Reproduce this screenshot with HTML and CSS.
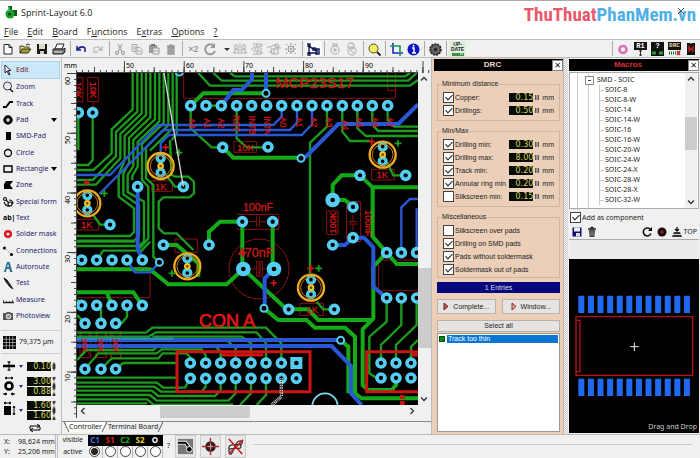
FILE: index.html
```html
<!DOCTYPE html>
<html lang="en">
<head>
    <meta charset="UTF-8">
    <meta name="viewport" content="width=device-width, initial-scale=1.0">
    <title>Sprint-Layout 6.0</title>
    <link rel="stylesheet" href="styles.css">
</head>
<body>
    <header class="titlebar">
        <svg class="app-icon" viewBox="0 0 13 13"><path d="M3 0h4v4h5v6H7z" fill="#0a5a14"/><circle cx="5" cy="8" r="4.5" fill="#16a02a"/><circle cx="4.5" cy="8" r="1.6" fill="#0b3d10"/><path d="M3 1h2v4H3z" fill="#3cc24b"/></svg>
        <span class="app-name">Sprint-Layout 6.0</span>
        <span class="brand"><span class="brand-red">ThuThuat</span><span class="brand-blue">PhanMem.vn</span></span>
        <button class="win-close" aria-label="Close window"><svg viewBox="0 0 8 8"><path d="M1 1l6 6M7 1L1 7" stroke="#456"/></svg></button>
    </header>

    <nav class="menu">
        <a href="#"><u>F</u>ile</a>
        <a href="#"><u>E</u>dit</a>
        <a href="#"><u>B</u>oard</a>
        <a href="#">F<u>u</u>nctions</a>
        <a href="#">E<u>x</u>tras</a>
        <a href="#"><u>O</u>ptions</a>
        <a href="#"><u>?</u></a>
    </nav>

    <div class="toolbar">
        <button aria-label="New"><svg viewBox="0 0 16 16"><path d="M4 3.500h5l3 3v6.500H4zM9 3.500v3h3" fill="#fff" stroke="#222"/></svg></button>
        <button aria-label="Open"><svg viewBox="0 0 16 16"><path d="M3 12V5h3l1 1h5v2" fill="#e8d860" stroke="#443"/><path d="M3 12l2-4h9l-3 4z" fill="#a89a30" stroke="#332"/><path d="M9 4q2-2 4 0" fill="none" stroke="#222"/></svg></button>
        <button aria-label="Save"><svg viewBox="0 0 16 16"><path d="M3 3h10v10H3z" fill="#1a1c10"/><path d="M5 3h6v5H5z" fill="#d8dcc8"/><path d="M6 10h4v3H6z" fill="#ccc"/></svg></button>
        <button aria-label="Print"><svg viewBox="0 0 16 16"><path d="M6 3h7l-2 5H4z" fill="#fff" stroke="#222"/><path d="M2 8h11l1-1v4l-2 2H2z" fill="#777" stroke="#222"/><path d="M3 11h8" stroke="#eee"/></svg></button>
        <span class="sep"></span>
        <button aria-label="Undo"><svg viewBox="0 0 16 16"><path d="M4 5v4h4M4 9q4-5 8-2v4" fill="none" stroke="#1a1a8c" stroke-width="1.500"/></svg></button>
        <button aria-label="Redo"><svg viewBox="0 0 16 16"><path d="M12 5v4H8M12 9q-4-5-8-2v4h4" fill="none" stroke="#bbb" stroke-width="1.300"/></svg></button>
        <span class="sep"></span>
        <button aria-label="Cut"><svg viewBox="0 0 16 16" fill="none" stroke="#aaa" stroke-width="1.300"><path d="M6 3l4 8M10 3l-4 8"/><circle cx="5" cy="12" r="1.500"/><circle cx="11" cy="12" r="1.500"/></svg></button>
        <button aria-label="Copy"><svg viewBox="0 0 16 16" fill="#eee" stroke="#aaa"><path d="M3 3.500h5v7H3zM7 6.500h4l2 2V13H7z"/><path d="M4 6h3M4 8h3M8 10h4"/></svg></button>
        <button aria-label="Paste"><svg viewBox="0 0 16 16"><path d="M3 4h8v8H3z" fill="#999"/><path d="M5 3h4v2H5z" fill="#777"/><path d="M7 7h6v6H7z" fill="#eee" stroke="#999"/><path d="M8 10h4" stroke="#999"/></svg></button>
        <button aria-label="Delete"><svg viewBox="0 0 16 16"><path d="M4 5h8M6.500 4h3M5 6.500h6v6.500H5z" fill="#bbb" stroke="#999" stroke-width="1.300"/><path d="M7 7v5M9 7v5" stroke="#888"/></svg></button>
        <span class="sep"></span>
        <button class="times">×2</button>
        <button aria-label="Rotate"><svg viewBox="0 0 16 16"><path d="M12 5a5 5 0 1 0 1 5" fill="none" stroke="#999" stroke-width="2"/><path d="M13 2v5H8z" fill="#999"/></svg></button>
        <button class="drop" aria-label="Rotate angle"><svg viewBox="0 0 13 16"><path d="M5 7h6l-3 3z" fill="#333"/></svg></button>
        <button aria-label="Mirror horizontally"><svg viewBox="0 0 16 16" fill="none" stroke="#aaa"><path d="M8 2v12" stroke-dasharray="2 1"/><path d="M3 13V4h3v9M3 8h3M13 13V4h-3v9M10 8h3M1 12h3M12 12h3"/></svg></button>
        <button aria-label="Mirror vertically"><svg viewBox="0 0 16 16" fill="none" stroke="#aaa"><path d="M2 8h12" stroke-dasharray="2 1"/><path d="M4 3h8v3H4M8 3v3M4 13h8v-3H4M8 10v3M12 3l2 2M12 13l2-2"/></svg></button>
        <button aria-label="Align"><svg viewBox="0 0 16 16" fill="none" stroke="#aaa"><path d="M1 6h4l2-2h3l2 3h3M5 8h7v5H6zM3 10l2 2M8 8v5"/><circle cx="11" cy="5" r="2"/></svg></button>
        <button aria-label="Snap to grid"><svg viewBox="0 0 16 16" fill="none" stroke="#999"><circle cx="8" cy="8" r="3"/><circle cx="8" cy="8" r="1"/><path d="M8 2v3M8 11v3M2 8h3M11 8h3M3 3l3 3M13 3l-3 3M3 13l3-3M13 13l-3-3" stroke-dasharray="2 1"/></svg></button>
        <span class="sep"></span>
        <button class="checked" aria-label="Rubberband"><svg viewBox="0 0 16 16" fill="none" stroke="#0c1850" stroke-width="1.400"><path d="M4 5v7h8V9L8 8zM4 5l4 3"/><path d="M3 3h2v2H3zM3 12h2v2H3zM11 8h3v5h-3zM8 7h2v2H8z"/></svg></button>
        <span class="sep"></span>
        <button aria-label="Lock"><svg viewBox="0 0 16 16" fill="none" stroke="#bbb" stroke-width="1.300"><circle cx="8" cy="9" r="4"/><path d="M6 6V3h4v3M8 7v4M6 9h4"/></svg></button>
        <button aria-label="Unlock"><svg viewBox="0 0 16 16" fill="none" stroke="#bbb" stroke-width="1.300"><circle cx="7" cy="5" r="3"/><circle cx="8" cy="10" r="4"/><path d="M6 9l4 3"/></svg></button>
        <span class="sep"></span>
        <button aria-label="Zoom"><svg viewBox="0 0 16 16"><circle cx="7.500" cy="7.500" r="4.500" fill="#f4ee63" stroke="#554f20"/><path d="M11 11l3.500 3.500" stroke="#222" stroke-width="2"/></svg></button>
        <span class="sep"></span>
        <button aria-label="Section"><svg viewBox="0 0 16 16" fill="none" stroke-width="1.600"><path d="M5 2v10h10" stroke="#1b2cc0"/><path d="M2 5h10v10" stroke="#13975b"/></svg></button>
        <button aria-label="Info"><svg viewBox="0 0 16 16"><circle cx="8.500" cy="8.500" r="6" fill="#0a15c8"/><path d="M7 7h2v5M7 12h4" stroke="#fff" stroke-width="1.500" fill="none"/><circle cx="8.500" cy="4.700" r="1" fill="#fff"/></svg></button>
        <span class="sep"></span>
        <button aria-label="Settings"><svg viewBox="0 0 16 16"><circle cx="8.500" cy="8.500" r="5.500" fill="#555" stroke="#222" stroke-width="1.500" stroke-dasharray="2 1"/><circle cx="8.500" cy="8.500" r="3" fill="none" stroke="#999" stroke-dasharray="1 1"/><circle cx="8.500" cy="8.500" r="1.500" fill="#222"/></svg></button>
        <span class="sep"></span>
        <button class="update" aria-label="Update"><span>UP-<br>DATE</span><svg viewBox="0 0 14 4"><path d="M1 1h12v3H1z" fill="#3f9141"/><path d="M9 2h3" stroke="#cfe9c8"/></svg></button>
        <span class="spacer"></span>
        <span class="sep"></span>
        <button aria-label="Footprints"><svg viewBox="0 0 16 16"><circle cx="8" cy="8.500" r="3.500" fill="none" stroke="#d874b4" stroke-width="2.600"/></svg></button>
        <button class="chip"><b>R1</b><svg viewBox="0 0 13 6"><path d="M6.500 0v6M5 1h3M5 5h3" stroke="#333"/></svg></button>
        <button class="chip"><b>?</b><svg viewBox="0 0 13 6"><path d="M0 0h13v6H0z" fill="#111"/><path d="M1 3h4M8 3h4" stroke="#2a9a38" stroke-width="3"/></svg></button>
        <button class="chip chip-drc"><b>DRC</b><svg viewBox="0 0 13 6"><path d="M1 3h3M5 3h3" stroke="#276e2a" stroke-width="3" stroke-dasharray="1 1"/><path d="M9 1l3 4M12 1L9 5" stroke="#b3201c" stroke-width="1.500"/></svg></button>
        <button aria-label="Macros"><svg viewBox="0 0 16 16"><path d="M4 2h8v12H4z" fill="#151010"/><path d="M6 11V6l2 3 2-3v5" fill="none" stroke="#c2201d" stroke-width="1.300"/><path d="M7 2h2" stroke="#ddd"/></svg></button>
    </div>

    <main class="main">
        <aside class="side">
            <div class="tools">
                <button class="tool selected"><svg viewBox="0 0 12 12"><path d="M3 1v8l2-2 2 4 1-.500-2-4h3z" fill="#fff" stroke="#223"/></svg>Edit</button>
                <button class="tool"><svg viewBox="0 0 12 12"><circle cx="5.500" cy="5" r="4" fill="#eef" stroke="#333"/><path d="M8 8l3 3" stroke="#111" stroke-width="1.500"/></svg>Zoom</button>
                <button class="tool"><svg viewBox="0 0 12 12"><path d="M1 9h3l4-5h3" fill="none" stroke="#000" stroke-width="2"/></svg>Track</button>
                <button class="tool"><svg viewBox="0 0 12 12"><circle cx="6" cy="6" r="3.200" fill="none" stroke="#000" stroke-width="3"/></svg>Pad<i class="more"></i></button>
                <button class="tool"><svg viewBox="0 0 12 12"><path d="M4 2h5v8H4z"/></svg>SMD-Pad</button>
                <button class="tool"><svg viewBox="0 0 12 12"><circle cx="6" cy="6" r="3.500" fill="none" stroke="#000" stroke-width="1.300"/></svg>Circle</button>
                <button class="tool"><svg viewBox="0 0 12 12"><path d="M2 3h8v6H2z" fill="none" stroke="#000" stroke-width="1.400"/></svg>Rectangle<i class="more"></i></button>
                <button class="tool"><svg viewBox="0 0 12 12"><path d="M4 2h7L8 6l3 4H2V5z"/></svg>Zone</button>
                <button class="tool"><svg viewBox="0 0 12 12" fill="none" stroke="#111" stroke-width="1.200"><circle cx="3" cy="3" r="1.500"/><circle cx="8" cy="8" r="2"/><path d="M4 4l3 3M2 6q2 5 6 4M7 4q4 0 4 4"/></svg>Special form</button>
                <button class="tool"><span class="ab">ab|</span>Text</button>
                <button class="tool"><svg viewBox="0 0 12 12"><circle cx="6" cy="6" r="2.800" fill="none" stroke="#e0101c" stroke-width="2.400"/></svg>Solder mask</button>
                <button class="tool"><svg viewBox="0 0 12 12"><circle cx="2.500" cy="3" r="1.600"/><circle cx="9.500" cy="9.500" r="1.600"/><path d="M3 3l6 6" stroke="#777" stroke-dasharray="1 1"/></svg>Connections</button>
                <button class="tool"><svg viewBox="0 0 12 12"><path d="M2 11L5 1h2.500l3 10H8L7.500 8h-3L4 11zM5 6h2L6 3z" fill="#28708e"/></svg>Autoroute</button>
                <button class="tool"><svg viewBox="0 0 12 12"><path d="M2 1l3 2 4 6 2 3-3-2-4-5z" fill="#222" stroke="#222"/></svg>Test</button>
                <button class="tool"><svg viewBox="0 0 12 12"><path d="M1 8.500h11" stroke="#222" stroke-width="1.500"/><path d="M1.500 6v2M4.500 7v1M7.500 7v1M10.500 6v2" stroke="#555"/></svg>Measure</button>
                <button class="tool"><svg viewBox="0 0 12 12"><path d="M1 3h3l1-1h3l1 1h2v7H1z" fill="#555"/><circle cx="6.500" cy="6.500" r="2.300" fill="#999" stroke="#eee"/></svg>Photoview</button>
            </div>
            <button class="snap"><svg viewBox="0 0 14 14"><path d="M0 0h14v14H0z"/><path d="M0 3.500h14M0 7h14M0 10.500h14M3.500 0v14M7 0v14M10.500 0v14" stroke="#ccc" stroke-width=".700"/></svg>79,375 µm</button>
            <div class="sizes">
                <div class="size">
                    <svg viewBox="0 0 14 12"><path d="M1 6h12" stroke="#000" stroke-width="2.500"/><path d="M7 1v4M7 7v4M5.500 2h3M5.500 10h3" stroke="#000"/></svg>
                    <i class="pick"></i>
                    <div class="fields"><input aria-label="Track width" value="0.10"></div>
                </div>
                <div class="size tall">
                    <svg viewBox="0 0 14 20"><circle cx="7" cy="10" r="3.500" fill="none" stroke="#000" stroke-width="2.600"/><path d="M3 2h8M3 2l2-1M3 2l2 1M11 2L9 1M11 2L9 3M1 18h4M9 18h4M5 18l-2-1v2zM9 18l2-1v2z" stroke="#000" fill="none"/></svg>
                    <i class="pick"></i>
                    <div class="fields"><input aria-label="Pad outer" value="3.00"><input aria-label="Pad inner" value="0.88"></div>
                </div>
                <div class="size tall">
                    <svg viewBox="0 0 14 20"><path d="M2 6h7v9H2z"/><path d="M2 3h7M12 6v9M2 3l2-1M2 3l2 1M9 3L7 2M9 3L7 4M12 6l-1 2M12 6l1 2M12 15l-1-2M12 15l1-2" stroke="#000" fill="none"/></svg>
                    <i class="pick"></i>
                    <div class="fields"><input aria-label="SMD width" value="1.60"><input aria-label="SMD height" value="1.60"></div>
                </div>
                <button class="swap" aria-label="Swap"><svg viewBox="0 0 14 8"><path d="M2 5V2h9M9 0l3 2-3 2M12 3v3H3M5 4L2 6l3 2" fill="none" stroke="#000"/></svg></button>
            </div>
        </aside>

        <section class="work">
            <div class="board">
                <svg class="ruler-top">
                    <path class="tick" d="M14 11.500H368" stroke-width="3" stroke-dasharray="1 4.970"/>
                    <path class="tick" d="M32 10H368" stroke-width="6" stroke-dasharray="1 28.850"/>
                    <path class="tick" d="M62 7H368" stroke-width="12" stroke-dasharray="1 58.700"/>
                    <path class="tick" d="M15 12.500H356"/>
                    <text x="2" y="8">mm</text><text x="64" y="8">50</text><text x="124" y="8">60</text><text x="183" y="8">70</text><text x="243" y="8">80</text><text x="303" y="8">90</text>
                </svg>
                <svg class="ruler-left">
                    <path class="tick" d="M13.500 0V345" stroke-width="3" stroke-dasharray="1 4.970"/>
                    <path class="tick" d="M12 30V345" stroke-width="6" stroke-dasharray="1 28.850"/>
                    <path class="tick" d="M10 0V345" stroke-width="10" stroke-dasharray="1 58.700"/>
                    <path class="tick" d="M14.500 0V345"/>
                    <text transform="translate(8 12) rotate(-90)">60</text><text transform="translate(8 71) rotate(-90)">50</text><text transform="translate(8 131) rotate(-90)">40</text><text transform="translate(8 190) rotate(-90)">30</text><text transform="translate(8 250) rotate(-90)">20</text><text transform="translate(8 309) rotate(-90)">10</text>
                </svg>

                <svg class="pcb" viewBox="51 39 1023 996" preserveAspectRatio="xMinYMin slice">
                    <defs>
                        <path id="pads" d="M55 158h0M98 158h0M233 380h0M370 380h0M150 494h0M488 262h0M624 261h0M310 555h0M447 555h0M547 485h0M638 485h0M900 346h0M1037 346h0M879 441h0M879 533h0M818 555h0M980 578h0M1024 578h0M1070 578h0
                            M392 137h0M438 137h0M484 137h0M530 137h0M575 137h0M620 137h0M665 137h0M711 137h0M756 137h0M801 137h0M847 137h0M892 137h0M937 137h0M983 137h0
                            M65 600h0M110 600h0M156 600h0M201 600h0M247 600h0M65 736h0M110 736h0M156 736h0M201 736h0M247 736h0
                            M75 790h0M123 790h0M167 790h0M75 927h0M123 927h0M167 927h0M686 748h0M823 748h0M980 714h0M1024 714h0M1070 714h0
                            M391 909h0M437 909h0M482 909h0M527 909h0M573 909h0M618 909h0M664 909h0M391 955h0M437 955h0M482 955h0M527 955h0M573 955h0M618 955h0M664 955h0M709 955h0
                            M963 909h0M1008 909h0M1053 909h0M963 954h0M1008 954h0M1053 954h0"/>
                        <path id="big-pads" d="M818 420h0M550 627h0M642 627h0"/>
                        <path id="vias" d="M723 295h0M618 100h0M298 607h0M612 745h0M842 841h0M358 36h0"/>
                        <g id="led">
                            <path d="M0-24h0M0 20h0" stroke="#4ccdf0" stroke-width="31" stroke-linecap="round"/>
                            <path d="M0-24h0M0 20h0" stroke="#000" stroke-width="11" stroke-linecap="round"/>
                            <circle r="39" fill="none" stroke="#efab1b" stroke-width="7"/>
                            <circle r="31" fill="none" stroke="#c67c10" stroke-width="3"/>
                            <circle r="7" fill="#704800" stroke="#f7c51e" stroke-width="6"/>
                        </g>
                        <path id="plus" d="M-10 0H10M0-10V10"/>
                    </defs>
                    <rect x="0" y="0" width="3000" height="3000"/>

                    <!-- component outlines below the copper -->
                    <g class="silk thin">
                        <path d="M371 39V115H1006V39M983 39V92H1006M51 624H270V713H51M1074 600H956V692H1074"/>
                        <path d="M83 53h33v72h-33zM99 125v20M36 53h33v72h-33z"/>
                        <path d="M275 362h62v32h-62zM48 478h68v32h-68zM935 328h68v32h-68zM720 730h70v36h-70zM522 245h68v32h-68zM345 537h68v40h-68z"/>
                        <path d="M800 453h34v70h-34zM860 425h42v120h-42zM879 465v20M866 485h26M866 492h26M879 492v20"/>
                        <path d="M530 463h126v45H530M565 485h22M590 470v30M598 470v30M598 485h22"/>
                        <circle cx="597" cy="627" r="90"/>
                        <path d="M570 627h20M590 604h7v46h-7zM600 604h7v46h-7zM607 627h16"/>
                        <path d="M60 815h32v78H60zM108 815h32v78h-32zM152 815h32v78h-32zM60 815l32 78M92 815l-32 78M108 815l32 78M140 815l-32 78M152 815l32 78M184 815l-32 78"/>
                    </g>

                    <g class="green">
                        <path d="M218 39V148L155 208V280L100 330H51M232 39V155L168 216V288L98 360H51M245 39V160L181 222V295L108 374H51"/>
                        <path d="M258 39V165L194 228V300L176 345V410L222 445V516L210 528H51M271 39V172L207 234V308L190 340V403L237 436V528L222 542H51"/>
                        <path d="M285 39V178L220 240V318L203 345V396L252 425V545L235 558H51M298 39V184L233 246V320L217 348V360M311 39V190L246 252V360L265 380V535L240 565"/>
                        <path d="M325 39V196L258 262V355L280 375V590L298 607M338 39V205L270 272M350 39V222L335 240"/>
                        <path d="M98 158V300L85 315H51M55 158V270M51 545H225M110 600L130 572H245L270 545"/>
                        <path d="M330 240L335 345L345 350H385L402 365V400L388 412H310L296 425V505L312 520H350L400 570M318 345L345 380H370M100 465L120 494H150"/>
                        <path d="M415 39L450 77H1050L1074 60M460 39L485 62H1045L1070 39M510 39L525 49H1035L1050 39"/>
                        <path d="M392 137V205L455 262H488M438 137H484M530 137V235L560 262H624M801 137V200L750 248V640"/>
                        <path d="M847 137V215L870 243H930M892 137V205L918 228H1074M937 137V195L955 213H1074M983 137V180L1003 200H1074M983 310L1000 346H1037"/>
                        <path d="M51 765L75 790M123 790V750L110 736M201 736V770L185 790H167M823 748H790L770 725"/>
                        <path d="M51 818H258L277 803H618L664 850V909M51 830H265L288 817H590L618 850V909M277 830H545L573 850V909M505 845L527 865V909"/>
                        <path d="M167 927L190 909H348M123 927L155 895H295L308 880H380L391 892V909M75 927L115 880H290L305 868H425L437 885V909M51 900L80 870H280L295 858H465L482 875V909"/>
                        <path d="M51 953H348M51 968H290L310 983H375L391 955M51 980H283L303 995H425L437 980V955M51 992H275L295 1008H465L482 990V955"/>
                        <path d="M51 1005H270L290 1022H505L527 1000V955M51 1018H262L280 1034H520M51 1030H262M573 955V1000L540 1035M618 955V1005L590 1035"/>
                        <path d="M980 714V785L928 830V940L950 954M1024 714V795L963 855V909M1070 714V795L1008 855V909M1074 840L1053 860V909"/>
                    </g>
                    <g class="green wide">
                        <path d="M392 137L430 100H618M488 262L520 293H723M447 555V515L480 485H547V627M638 485V627M310 555H350L415 610V650"/>
                        <path d="M900 346H845L818 375V420H855L879 441M900 346L938 382H1074M938 382V530L980 578L1010 612H1074M940 620L980 578"/>
                        <path d="M51 628H270L325 673H500L550 627M51 697H220L247 736M140 697L156 736M51 720L65 736"/>
                        <path d="M550 627L680 748M612 745L655 780H740L765 803H855L885 830V1000L905 1015H1074"/>
                        <path d="M686 748H745L775 780H940M940 620V775L908 808V975L925 990H995L1008 975V954M842 841L865 860V1000"/>
                    </g>

                    <g class="blue">
                        <path d="M51 345H150L295 195H640L665 170V137M118 402L310 210H690L711 188V137M302 290V250L327 225H725L756 193V137"/>
                        <path d="M201 600L225 637H270L298 607M1024 578V442L1050 417H1074M1070 578V445"/>
                    </g>
                    <g class="blue wide">
                        <path d="M484 137L520 90H545L576 57V39M618 100V39M723 295L740 288L835 192H1015L1074 133M233 380V565L247 600"/>
                        <path d="M818 555H855L879 533H912L940 562V680L980 714M642 627L614 655V745"/>
                        <path d="M51 840H842M51 858H815L873 918V1000L905 1035"/>
                    </g>
                    <path d="M51 836H340" stroke="#2d8fb5" stroke-width="7"/>

                    <g class="silk frame">
                        <path d="M351 875H750V995H351zM485 885H610M1074 875H920V995H1074M1055 885H1074"/>
                    </g>
                    <path d="M1027 1005v12M1027 1023v12" stroke="#d01010" stroke-width="14"/>

                    <g fill="none" stroke-linecap="round">
                        <use href="#pads" stroke="#55cdf2" stroke-width="35"/>
                        <use href="#pads" stroke="#000" stroke-width="13"/>
                        <use href="#big-pads" stroke="#55cdf2" stroke-width="44"/>
                        <use href="#big-pads" stroke="#000" stroke-width="14"/>
                        <use href="#vias" stroke="#55cdf2" stroke-width="27"/>
                        <use href="#vias" stroke="#000" stroke-width="15"/>
                        <circle cx="795" cy="1038" r="38" stroke="#7fdcf0" stroke-width="5"/>
                    </g>
                    <path d="M691 891h36v36h-36z" fill="#55cdf2"/><circle cx="709" cy="909" r="7"/>

                    <use href="#led" x="302" y="318"/><use href="#led" x="82" y="430"/><use href="#led" x="382" y="619"/><use href="#led" x="968" y="284"/><use href="#led" x="753" y="683"/>

                    <g stroke="#d31616" stroke-width="5">
                        <use href="#plus" x="317" y="262"/><use href="#plus" x="80" y="368"/><use href="#plus" x="935" y="245"/><use href="#plus" x="752" y="625"/><use href="#plus" x="550" y="578"/><use href="#plus" x="641" y="669"/>
                    </g>
                    <g stroke="#1ba51f" stroke-width="5">
                        <use href="#plus" x="357" y="278"/><use href="#plus" x="133" y="400"/><use href="#plus" x="336" y="640"/><use href="#plus" x="1014" y="250"/><use href="#plus" x="776" y="625"/>
                    </g>

                    <g class="label">
                        <text x="764" y="84" font-size="46">MCP23S17</text>
                        <text x="594" y="453" font-size="32">100nF</text>
                        <text x="587" y="591" font-size="38">470nF</text>
                        <text class="con" x="501" y="800" font-size="54">CON A</text>
                        <g font-size="28">
                            <text x="302" y="390">1K</text><text x="80" y="504">1K</text><text x="967" y="354">1K</text><text x="757" y="759">1K</text><text x="556" y="272">10K</text>
                            <text transform="translate(89 90) rotate(90)">10K</text><text transform="translate(46 90) rotate(90)">10K</text>
                            <text transform="translate(827 488) rotate(-90)">100K</text><text transform="translate(916 490) rotate(90)">100nF</text>
                        </g>
                        <g font-size="25">
                            <text transform="translate(387 190) rotate(90)">A3</text><text transform="translate(431 190) rotate(90)">A1</text><text transform="translate(475 190) rotate(90)">A2</text><text transform="translate(520 190) rotate(90)">RST</text>
                            <text transform="translate(566 196) rotate(90)">INTB</text><text transform="translate(612 196) rotate(90)">INTA</text><text transform="translate(661 187) rotate(90)">A0</text><text transform="translate(708 187) rotate(90)">A1</text><text transform="translate(753 187) rotate(90)">A2</text>
                            <text transform="translate(798 187) rotate(90)">A3</text><text transform="translate(845 195) rotate(90)">A4</text><text transform="translate(889 187) rotate(90)">A5</text><text transform="translate(935 187) rotate(90)">A6</text><text transform="translate(981 187) rotate(90)">A7</text>
                        </g>
                        <g font-size="24">
                            <text transform="translate(67 855) rotate(90)">10K</text><text transform="translate(115 855) rotate(90)">10K</text><text transform="translate(159 855) rotate(90)">10K</text>
                        </g>
                    </g>
                    <path d="M312 39L370 380" stroke="#d8d8d8" stroke-width="4"/>
                    <path d="M664 955V1010L635 1035" fill="none" stroke="#ddd" stroke-width="10" stroke-dasharray="3 2"/>
                    <path d="M664 955V1010L635 1035" fill="none" stroke="#444" stroke-width="4" stroke-dasharray="4 3"/>
                </svg>

                <div class="vscroll">
                    <svg viewBox="0 0 12 12"><path d="M3 7.500l3-3 3 3"/></svg>
                    <i class="thumb"></i>
                    <svg viewBox="0 0 12 12"><path d="M3 4.500l3 3 3-3"/></svg>
                </div>
                <div class="hscroll">
                    <svg viewBox="0 0 12 12"><path d="M7.500 3l-3 3 3 3"/></svg>
                    <i class="thumb"></i>
                    <svg viewBox="0 0 12 12"><path d="M4.500 3l3 3-3 3"/></svg>
                </div>
            </div>
            <div class="tabs">
                <button class="tab current">Controller</button>
                <button class="tab">Terminal Board</button>
            </div>
        </section>

        <section class="drc">
            <div class="panel-title">DRC<button aria-label="Close DRC">✕</button></div>
            <div class="drc-body">
                <fieldset>
                    <legend>Minimum distance</legend>
                    <div class="rule"><label><input type="checkbox" checked>Copper:</label><input class="num" aria-label="Copper" value="0.15"><i class="spin"></i>mm</div>
                    <div class="rule"><label><input type="checkbox" checked>Drillings:</label><input class="num" aria-label="Drillings" value="0.50"><i class="spin"></i>mm</div>
                </fieldset>
                <fieldset>
                    <legend>Min/Max</legend>
                    <div class="rule"><label><input type="checkbox" checked>Drilling min:</label><input class="num" aria-label="Drilling min" value="0.30"><i class="spin"></i>mm</div>
                    <div class="rule"><label><input type="checkbox" checked>Drilling max:</label><input class="num" aria-label="Drilling max" value="8.00"><i class="spin"></i>mm</div>
                    <div class="rule"><label><input type="checkbox" checked>Track min:</label><input class="num" aria-label="Track min" value="0.20"><i class="spin"></i>mm</div>
                    <div class="rule"><label><input type="checkbox" checked>Annular ring min</label><input class="num" aria-label="Annular ring min" value="0.20"><i class="spin"></i>mm</div>
                    <div class="rule"><label><input type="checkbox">Silkscreen min:</label><input class="num" aria-label="Silkscreen min" value="0.15"><i class="spin"></i>mm</div>
                </fieldset>
                <fieldset class="misc">
                    <legend>Miscellaneous</legend>
                    <div class="rule"><label><input type="checkbox">Silkscreen over pads</label></div>
                    <div class="rule"><label><input type="checkbox" checked>Drilling on SMD pads</label></div>
                    <div class="rule"><label><input type="checkbox" checked>Pads without soldermask</label></div>
                    <div class="rule"><label><input type="checkbox" checked>Soldermask out of pads</label></div>
                </fieldset>
                <div class="entries">1 Entries</div>
                <div class="run">
                    <button><svg viewBox="0 0 6 9"><path d="M1 1v7l4-3.500z" fill="#c4524a" stroke="#702420"/></svg>Complete...</button>
                    <button><svg viewBox="0 0 6 9"><path d="M1 1v7l4-3.500z" fill="#e8a8a0" stroke="#8c2a24"/></svg>Window...</button>
                </div>
                <button class="select-all">Select all</button>
                <ul class="results">
                    <li><i></i><span>Track too thin</span></li>
                </ul>
            </div>
        </section>

        <i class="splitter"></i>

        <section class="macros">
            <div class="panel-title red">Macros<button aria-label="Close Macros">✕</button></div>
            <div class="tree">
                <div class="tree-list">
                    <div class="folder">SMD - SOIC</div>
                    <ul>
                        <li>SOIC-8</li>
                        <li>SOIC-8-W</li>
                        <li>SOIC-14</li>
                        <li>SOIC-14-W</li>
                        <li>SOIC-16</li>
                        <li>SOIC-16-W</li>
                        <li>SOIC-20-W</li>
                        <li>SOIC-24-W</li>
                        <li>SOIC-24-X</li>
                        <li>SOIC-28-W</li>
                        <li>SOIC-28-X</li>
                        <li>SOIC-32-W</li>
                    </ul>
                </div>
                <div class="vscroll">
                    <svg viewBox="0 0 12 12"><path d="M3 7.500l3-3 3 3"/></svg>
                    <i class="thumb"></i>
                    <svg viewBox="0 0 12 12"><path d="M3 4.500l3 3 3-3"/></svg>
                </div>
            </div>
            <label class="as-component"><input type="checkbox" checked>Add as component</label>
            <div class="macro-bar">
                <button aria-label="Save macro"><svg viewBox="0 0 12 12"><path d="M1.500 1.500h9v9h-9z" fill="#10106c"/><path d="M3 1.500h6v4H3z" fill="#eef"/><path d="M5 7h4v3.500H5z" fill="#ddd"/></svg></button>
                <button aria-label="Delete macro"><svg viewBox="0 0 12 12"><path d="M2 3h8M4.500 1.500h3" stroke="#222" stroke-width="1.300"/><path d="M3 4h6l-.500 7h-5z" fill="#444"/><path d="M5 5v5M7 5v5" stroke="#aaa" stroke-width=".700"/></svg></button>
                <span class="spacer"></span>
                <button aria-label="Rotate macro"><svg viewBox="0 0 12 12"><path d="M9.500 3.500a4 4 0 1 0 .500 4" fill="none" stroke="#111" stroke-width="1.600"/><path d="M11 1v4H7z"/></svg></button>
                <button aria-label="Via"><svg viewBox="0 0 12 12"><circle cx="6" cy="6" r="4.500" fill="#1a0606"/><circle cx="6" cy="6" r="1.500" fill="#b8232a"/></svg></button>
                <button class="top-side"><svg viewBox="0 0 12 12"><path d="M3 6h6l2 5H1z" fill="#333"/><path d="M6 1v4M4 3l2 2 2-2" stroke="#111" fill="none" stroke-width="1.300"/><path d="M2 8.500h8" stroke="#ccc"/></svg>TOP</button>
            </div>
            <div class="strip"></div>
            <div class="preview">
                <svg viewBox="21 609 390 522" preserveAspectRatio="xMidYMid meet">
                    <path d="M49 745h336M49 994h336" stroke="#1f6af0" stroke-width="52" stroke-dasharray="18 10.800"/>
                    <path d="M42 782h350v176H42zM42 793h12v154H42z" fill="none" stroke="#b81414" stroke-width="4"/>
                    <path d="M205 872h25M217 860v25" stroke="#eee" stroke-width="3"/>
                </svg>
                <span>Drag and Drop</span>
            </div>
        </section>
    </main>

    <footer class="status">
        <div class="coords"><span>X:</span><span>98,624 mm</span><span>Y:</span><span>25,206 mm</span></div>
        <table class="layers">
            <tr><th>visible</th><td class="c1">C1</td><td class="s1">S1</td><td class="c2">C2</td><td class="s2">S2</td><td class="o">O</td></tr>
            <tr><th>active</th>
                <td><input type="radio" name="layer" aria-label="C1" checked></td>
                <td><input type="radio" name="layer" aria-label="S1"></td>
                <td><input type="radio" name="layer" aria-label="C2"></td>
                <td><input type="radio" name="layer" aria-label="S2"></td>
                <td><input type="radio" name="layer" aria-label="O"></td>
            </tr>
        </table>
        <a class="help" href="#">?</a>
        <button class="mode" aria-label="Ground plane"><svg viewBox="0 0 20 20"><path d="M2 2h16v16H2z" fill="#777"/><path d="M2 6h8l5 7" fill="none" stroke="#fff" stroke-width="4"/><path d="M2 6h8l5 7" fill="none" stroke="#000" stroke-width="2"/><circle cx="14" cy="13" r="3" stroke="#fff"/></svg></button>
        <button class="mode" aria-label="Crosshair"><svg viewBox="0 0 20 20"><circle cx="10" cy="10" r="5.500" fill="#222"/><path d="M10 1v18M1 10h18" stroke="#b3262a" stroke-width="1.500"/><path d="M10 7v6M7 10h6" stroke="#e9a0a0"/></svg></button>
        <button class="mode" aria-label="Connections off"><svg viewBox="0 0 20 20" fill="none"><path d="M3 13q-1-5 6-5h7q3-4-1-4t-7 9-5 2q0-3 6-3h4q4 0 2-4" stroke="#333" stroke-width="1.300"/><path d="M3 2l14 16M18 3L3 18" stroke="#c01c20" stroke-width="1.600"/></svg></button>
        <div class="hint"></div>
    </footer>
</body>
</html>
```

FILE: styles.css
```css
* {
    box-sizing: border-box;
}
body {
    margin: 0;
    height: 100vh;
    display: flex;
    flex-direction: column;
    overflow: hidden;
    background: #f0f0f0;
    color: #222;
    font: 7px/10px "Noto Sans", sans-serif;
}
button, input {
    font: inherit;
    color: inherit;
    margin: 0;
    padding: 0;
    border: 0;
    background: none;
    border-radius: 0;
}
svg {
    display: block;
}
a {
    color: inherit;
    text-decoration: none;
}
.spacer {
    flex: 1;
}

/* title and menu */
.titlebar {
    position: relative;
    height: 24px;
    flex: none;
    display: flex;
    align-items: center;
    padding: 0 4px 0 5px;
    background: #fff;
    border-top: 1px solid #aaa;
    font: 9px/12px "Open Sans", sans-serif;
}
.app-icon {
    width: 13px;
    height: 13px;
    margin-right: 3px;
}
.brand {
    margin-left: auto;
    padding-top: 5px;
    font: bold 19px/20px "Liberation Sans Narrow", "Roboto Condensed", sans-serif;
}
.brand-red {
    color: #e8596c;
}
.brand-blue {
    color: #4fb0e6;
}
.win-close {
    position: absolute;
    right: 15px;
    top: 6px;
    width: 8px;
    height: 8px;
}
.menu {
    height: 16px;
    flex: none;
    display: flex;
    gap: 9px;
    padding: 1px 4px;
    background: #fff;
    border-bottom: 1px solid #bbb;
    font: 9px/13px "Open Sans", sans-serif;
}

/* toolbar */
.toolbar {
    height: 18px;
    flex: none;
    display: flex;
    align-items: center;
    border-bottom: 1px solid #bbb;
    background: #f0f0f0;
}
.toolbar button {
    width: 17px;
    height: 16px;
    flex: none;
}
.toolbar button > svg {
    width: 16px;
    height: 16px;
}
.toolbar .drop {
    width: 13px;
}
.toolbar .drop > svg {
    width: 13px;
}
.toolbar .times {
    font: bold 9px/16px "Liberation Sans", sans-serif;
    color: #999;
}
.toolbar .checked {
    background: #fbfbfb;
}
.sep {
    width: 1px;
    height: 15px;
    margin: 0 2px;
    background: #aaa;
}
.toolbar .update {
    background: #ddeedd;
    font: bold 5px/5px "Liberation Sans", sans-serif;
    text-align: center;
}
.toolbar .update > svg {
    width: 14px;
    height: 4px;
    margin: 0 auto;
}
.toolbar .chip {
    padding: 0 2px;
    font: bold 7px/8px "Liberation Mono", monospace;
}
.chip b {
    display: block;
    background: #111;
    color: #fff;
}
.chip-drc b {
    font-size: 6px;
    color: #ecd9b0;
}
.toolbar .chip > svg {
    width: 13px;
    height: 6px;
}

/* main row */
.main {
    flex: 1;
    min-height: 0;
    display: flex;
}
.side {
    width: 62px;
    flex: none;
    display: flex;
    flex-direction: column;
    padding: 3px 1px 0;
    border-right: 1px solid #bbb;
}
.tools {
    flex: 1;
    display: flex;
    flex-direction: column;
    margin-bottom: 6px;
}
.tool {
    flex: 1;
    display: flex;
    align-items: center;
    color: #22226c;
    white-space: nowrap;
}
.tool svg {
    width: 12px;
    height: 12px;
    margin: 0 2px 0 1px;
}
.tool.selected {
    background: #cce8f8;
    border: 1px solid #a8d4ee;
    padding-right: 1px;
    color: #6c2238;
}
.tool.selected svg {
    margin-left: 0;
}
.ab {
    width: 12px;
    margin: 0 1px 0 2px;
    color: #000;
    font-weight: bold;
}
.more, .pick {
    width: 0;
    border: 3px solid transparent;
    border-top: 4px solid #000;
    border-bottom: 0;
}
.more {
    margin: 0 3px 0 auto;
}
.snap {
    height: 24px;
    display: flex;
    align-items: center;
    gap: 3px;
    padding-left: 2px;
    border: 1px solid #ccc;
    border-width: 1px 0;
}
.snap svg {
    width: 13px;
    height: 13px;
}
.sizes {
    height: 80px;
    display: flex;
    flex-direction: column;
    gap: 4px;
    padding-top: 6px;
}
.size {
    display: flex;
    align-items: center;
}
.size > svg {
    width: 14px;
    height: 12px;
    margin-left: 1px;
}
.size.tall > svg {
    height: 20px;
}
.pick {
    border-width: 3px 2px 0;
    border-top-color: #2a2aa0;
    margin: 0 4px 0 3px;
}
.fields {
    display: grid;
    gap: 1px;
    padding-right: 5px;
    background: radial-gradient(#333 1px, transparent 2px) right center / 4px 10px repeat-y;
}
.fields input, .num {
    width: 24px;
    height: 9px;
    flex: none;
    background: #080c04;
    color: #d2d26a;
    font: 8px/9px "DejaVu Sans", sans-serif;
    text-align: right;
}
.swap {
    width: 22px;
    margin: 0 auto;
    padding-left: 8px;
}

/* board */
.work {
    flex: 1;
    min-width: 0;
    display: flex;
    flex-direction: column;
}
.board {
    flex: 1;
    min-height: 0;
    display: grid;
    grid-template-columns: 15px 1fr 13px;
    grid-template-rows: 15px 1fr 13px;
    padding-bottom: 3px;
    border-bottom: 1px solid #888;
}
.ruler-top {
    grid-column: 1 / 4;
    width: 100%;
    height: 13px;
    margin-top: 2px;
}
.ruler-left {
    grid-row: 2 / 4;
    width: 15px;
    height: 100%;
}
.ruler-top text, .ruler-left text {
    font-size: 7px;
}
.tick {
    stroke: #444;
    fill: none;
}
.pcb {
    width: 100%;
    height: 100%;
    min-width: 0;
    min-height: 0;
}
.green, .blue, .silk {
    fill: none;
}
.green {
    stroke: #1c9c1f;
    stroke-width: 7;
}
.green.wide {
    stroke: #14aa18;
    stroke-width: 12;
}
.blue {
    stroke: #2858d4;
    stroke-width: 7;
}
.blue.wide {
    stroke-width: 12;
}
.silk {
    stroke: #8e1212;
    stroke-width: 3;
}
.silk.frame {
    stroke: #cc1414;
    stroke-width: 9;
}
.label text {
    font-family: "Liberation Sans", sans-serif;
    fill: #c81818;
    stroke: #c81818;
    stroke-width: 1;
    text-anchor: middle;
}
.label .con {
    fill: #e01818;
    stroke: #e01818;
    stroke-width: 2;
}
.vscroll {
    display: grid;
    grid-template-rows: 12px 1fr 12px;
    background: #f0f0f0;
}
.vscroll svg, .hscroll svg {
    width: 12px;
    height: 12px;
    fill: none;
    stroke: #333;
    stroke-width: 1.3;
}
.thumb {
    background: #cdcdcd;
}
.board .vscroll .thumb {
    margin: 183px 0 45px;
}
.tree .vscroll .thumb {
    margin: 32px 0 46px;
}
.hscroll {
    grid-column: 2;
    display: grid;
    grid-template-columns: 12px 1fr 12px;
}
.hscroll .thumb {
    margin: 1px 156px 0 71px;
}
.tabs {
    height: 12px;
    flex: none;
    display: flex;
    padding-left: 4px;
}
.tab {
    position: relative;
    height: 10px;
    padding: 0 3px;
}
.tab::before, .tab::after {
    content: "";
    position: absolute;
    top: 0;
    bottom: 0;
    left: 0;
    border-left: 1px solid #555;
    transform: skewX(25deg);
}
.tab + .tab::before {
    display: none;
}
.tab::after {
    left: auto;
    right: 0;
    transform: skewX(-25deg);
}
.tab.current {
    background: #fff;
}

/* docked panels */
.panel-title {
    position: relative;
    height: 12px;
    flex: none;
    background: #000;
    color: #e8d8cc;
    text-align: center;
    padding-right: 12px;
    font: bold 8px/12px "Liberation Sans", sans-serif;
}
.panel-title.red {
    color: #d83038;
}
.panel-title button {
    position: absolute;
    right: 0;
    top: 1px;
    width: 11px;
    height: 11px;
    border: 1px solid #888;
    background: #fff;
    color: #111;
    font: bold 8px/9px "DejaVu Sans", sans-serif;
}
.drc {
    width: 133px;
    flex: none;
    display: flex;
    flex-direction: column;
    padding: 1px 0 2px 2px;
    border: solid #bbb;
    border-width: 0 1px;
    background: #ebcfb8;
    font: 7px/10px "Liberation Sans", sans-serif;
}
.drc-body {
    flex: 1;
    min-height: 0;
    display: flex;
    flex-direction: column;
    padding: 9px 3px 0;
}
fieldset {
    margin: 0 0 6px;
    padding: 3px 5px;
    border: 1px solid #cdb5a2;
    min-width: 0;
}
.misc {
    margin-bottom: 4px;
    padding-bottom: 1px;
}
legend {
    padding: 0 1px;
    margin-left: -2px;
    line-height: 8px;
}
.rule {
    height: 13px;
    display: flex;
    align-items: center;
}
.rule label {
    flex: 1;
    min-width: 0;
    display: flex;
    align-items: center;
    gap: 1px;
    white-space: nowrap;
}
input[type="checkbox"] {
    appearance: none;
    position: relative;
    width: 11px;
    height: 11px;
    flex: none;
    background: #fff;
    border: 1px solid #444;
}
input[type="checkbox"]:checked::after {
    content: "";
    position: absolute;
    left: 3px;
    top: 0;
    width: 3px;
    height: 6px;
    border: solid #222;
    border-width: 0 1px 1px 0;
    transform: rotate(45deg);
}
.spin {
    width: 4px;
    height: 5px;
    flex: none;
    margin: 0 3px 0 2px;
    border: solid #555;
    border-width: 0 1px;
    background: #999;
}
.entries {
    flex: none;
    background: #06067c;
    color: #dcdcf0;
    text-align: center;
    line-height: 11px;
}
.run {
    display: grid;
    grid-template-columns: 1fr 1fr;
    gap: 6px;
    margin: 6px 0;
}
.run button, .select-all {
    display: flex;
    align-items: center;
    justify-content: center;
    gap: 4px;
    height: 15px;
    background: #e6e4e2;
    border: 1px solid #b9b2ac;
}
.run svg {
    width: 6px;
    height: 9px;
}
.select-all {
    flex: none;
    height: 12px;
}
.results {
    flex: 1;
    margin: 1px 0 0;
    padding: 1px;
    list-style: none;
    background: #fff;
    border: 1px solid #999;
}
.results li {
    display: flex;
    align-items: center;
    gap: 2px;
    line-height: 8px;
}
.results i {
    width: 6px;
    height: 6px;
    background: #0b8a14;
    border: 1px solid #064c0a;
}
.results span {
    flex: 1;
    padding-left: 1px;
    background: #0a76d4;
    color: #fff;
}
.splitter {
    width: 4px;
    flex: none;
    background: repeating-conic-gradient(#c8c8c8 0 25%, #fafafa 0 50%) 0 0 / 2px 2px;
}
.macros {
    width: 132px;
    flex: none;
    display: flex;
    flex-direction: column;
    padding: 1px;
}
.tree {
    display: grid;
    grid-template-columns: 1fr 12px;
    height: 137px;
    margin-top: 1px;
    padding-right: 1px;
    background: #fff;
    border: 1px solid #aaa;
    overflow: hidden;
}
.tree-list {
    background: linear-gradient(#ccc, #ccc) 7px 0 / 1px 100% no-repeat, linear-gradient(#ccc, #ccc) 18px 0 / 1px 100% no-repeat;
}
.tree-list ul {
    margin: 0 0 0 29px;
    padding: 0;
    list-style: none;
    border-left: 1px solid #ccc;
}
.tree-list li {
    display: flex;
    align-items: center;
    gap: 1px;
    line-height: 10px;
}
.tree-list li::before {
    content: "";
    width: 4px;
    height: 1px;
    background: #ccc;
}
.folder {
    display: flex;
    align-items: center;
    gap: 3px;
    padding: 2px 0 0 15px;
}
.folder::before {
    content: "";
    width: 7px;
    height: 7px;
    border: 1px solid #888;
    background: linear-gradient(#444, #444) center / 3px 1px no-repeat #fff;
}
.as-component {
    display: flex;
    align-items: center;
    gap: 1px;
    height: 13px;
    margin-top: 2px;
    padding-left: 1px;
}
.macro-bar {
    display: flex;
    align-items: center;
    gap: 3px;
    height: 15px;
    padding: 0 2px;
}
.macro-bar svg {
    width: 12px;
    height: 12px;
}
.top-side {
    display: flex;
    align-items: center;
    gap: 1px;
}
.strip {
    height: 20px;
    flex: none;
    border-top: 1px solid #aaa;
    background: #ebebeb;
}
.preview {
    flex: 1;
    min-height: 0;
    position: relative;
    background: #000;
}
.preview svg {
    width: 100%;
    height: 100%;
}
.preview span {
    position: absolute;
    right: 2px;
    bottom: 1px;
    color: #ccc;
}

/* status bar */
.status {
    height: 24px;
    flex: none;
    display: flex;
    align-items: stretch;
    border-top: 1px solid #bbb;
}
.coords {
    width: 56px;
    display: grid;
    grid-template-columns: 14px 1fr;
    align-content: center;
    padding-left: 4px;
    margin-right: 1px;
    border-right: 1px solid #bbb;
    white-space: nowrap;
}
.layers {
    border-collapse: collapse;
    border-left: 1px solid #bbb;
    line-height: 10px;
}
.layers th {
    width: 30px;
    padding: 0;
    font-weight: normal;
}
.layers td {
    width: 15px;
    padding: 0;
    text-align: center;
    border-right: 1px solid #bbb;
}
.layers tr:first-child td {
    background: #000;
    border: 0;
    font-weight: bold;
    font-size: 8px;
}
.layers .c1 {
    color: #3a6ae0;
}
.layers .s1 {
    color: #e02020;
}
.layers .c2 {
    color: #1ea52a;
}
.layers .s2 {
    color: #e0d030;
}
.layers .o {
    color: #fff;
}
input[type="radio"] {
    appearance: none;
    display: block;
    width: 11px;
    height: 11px;
    margin: 0 auto;
    border: 1px solid #444;
    border-radius: 50%;
    background: #fff;
}
input[type="radio"]:checked {
    background: radial-gradient(#222 3px, #fff 4px);
}
.help {
    padding: 6px 4px 0;
}
.mode {
    width: 21px;
    margin: 0 3px 0 1px;
    background: #e8e8e8;
    border: 1px solid #ccc;
}
.mode svg {
    width: 100%;
    height: 100%;
}
.hint {
    flex: 1;
    margin: 9px 8px 0 4px;
    border-top: 1px solid #ccc;
}
```
